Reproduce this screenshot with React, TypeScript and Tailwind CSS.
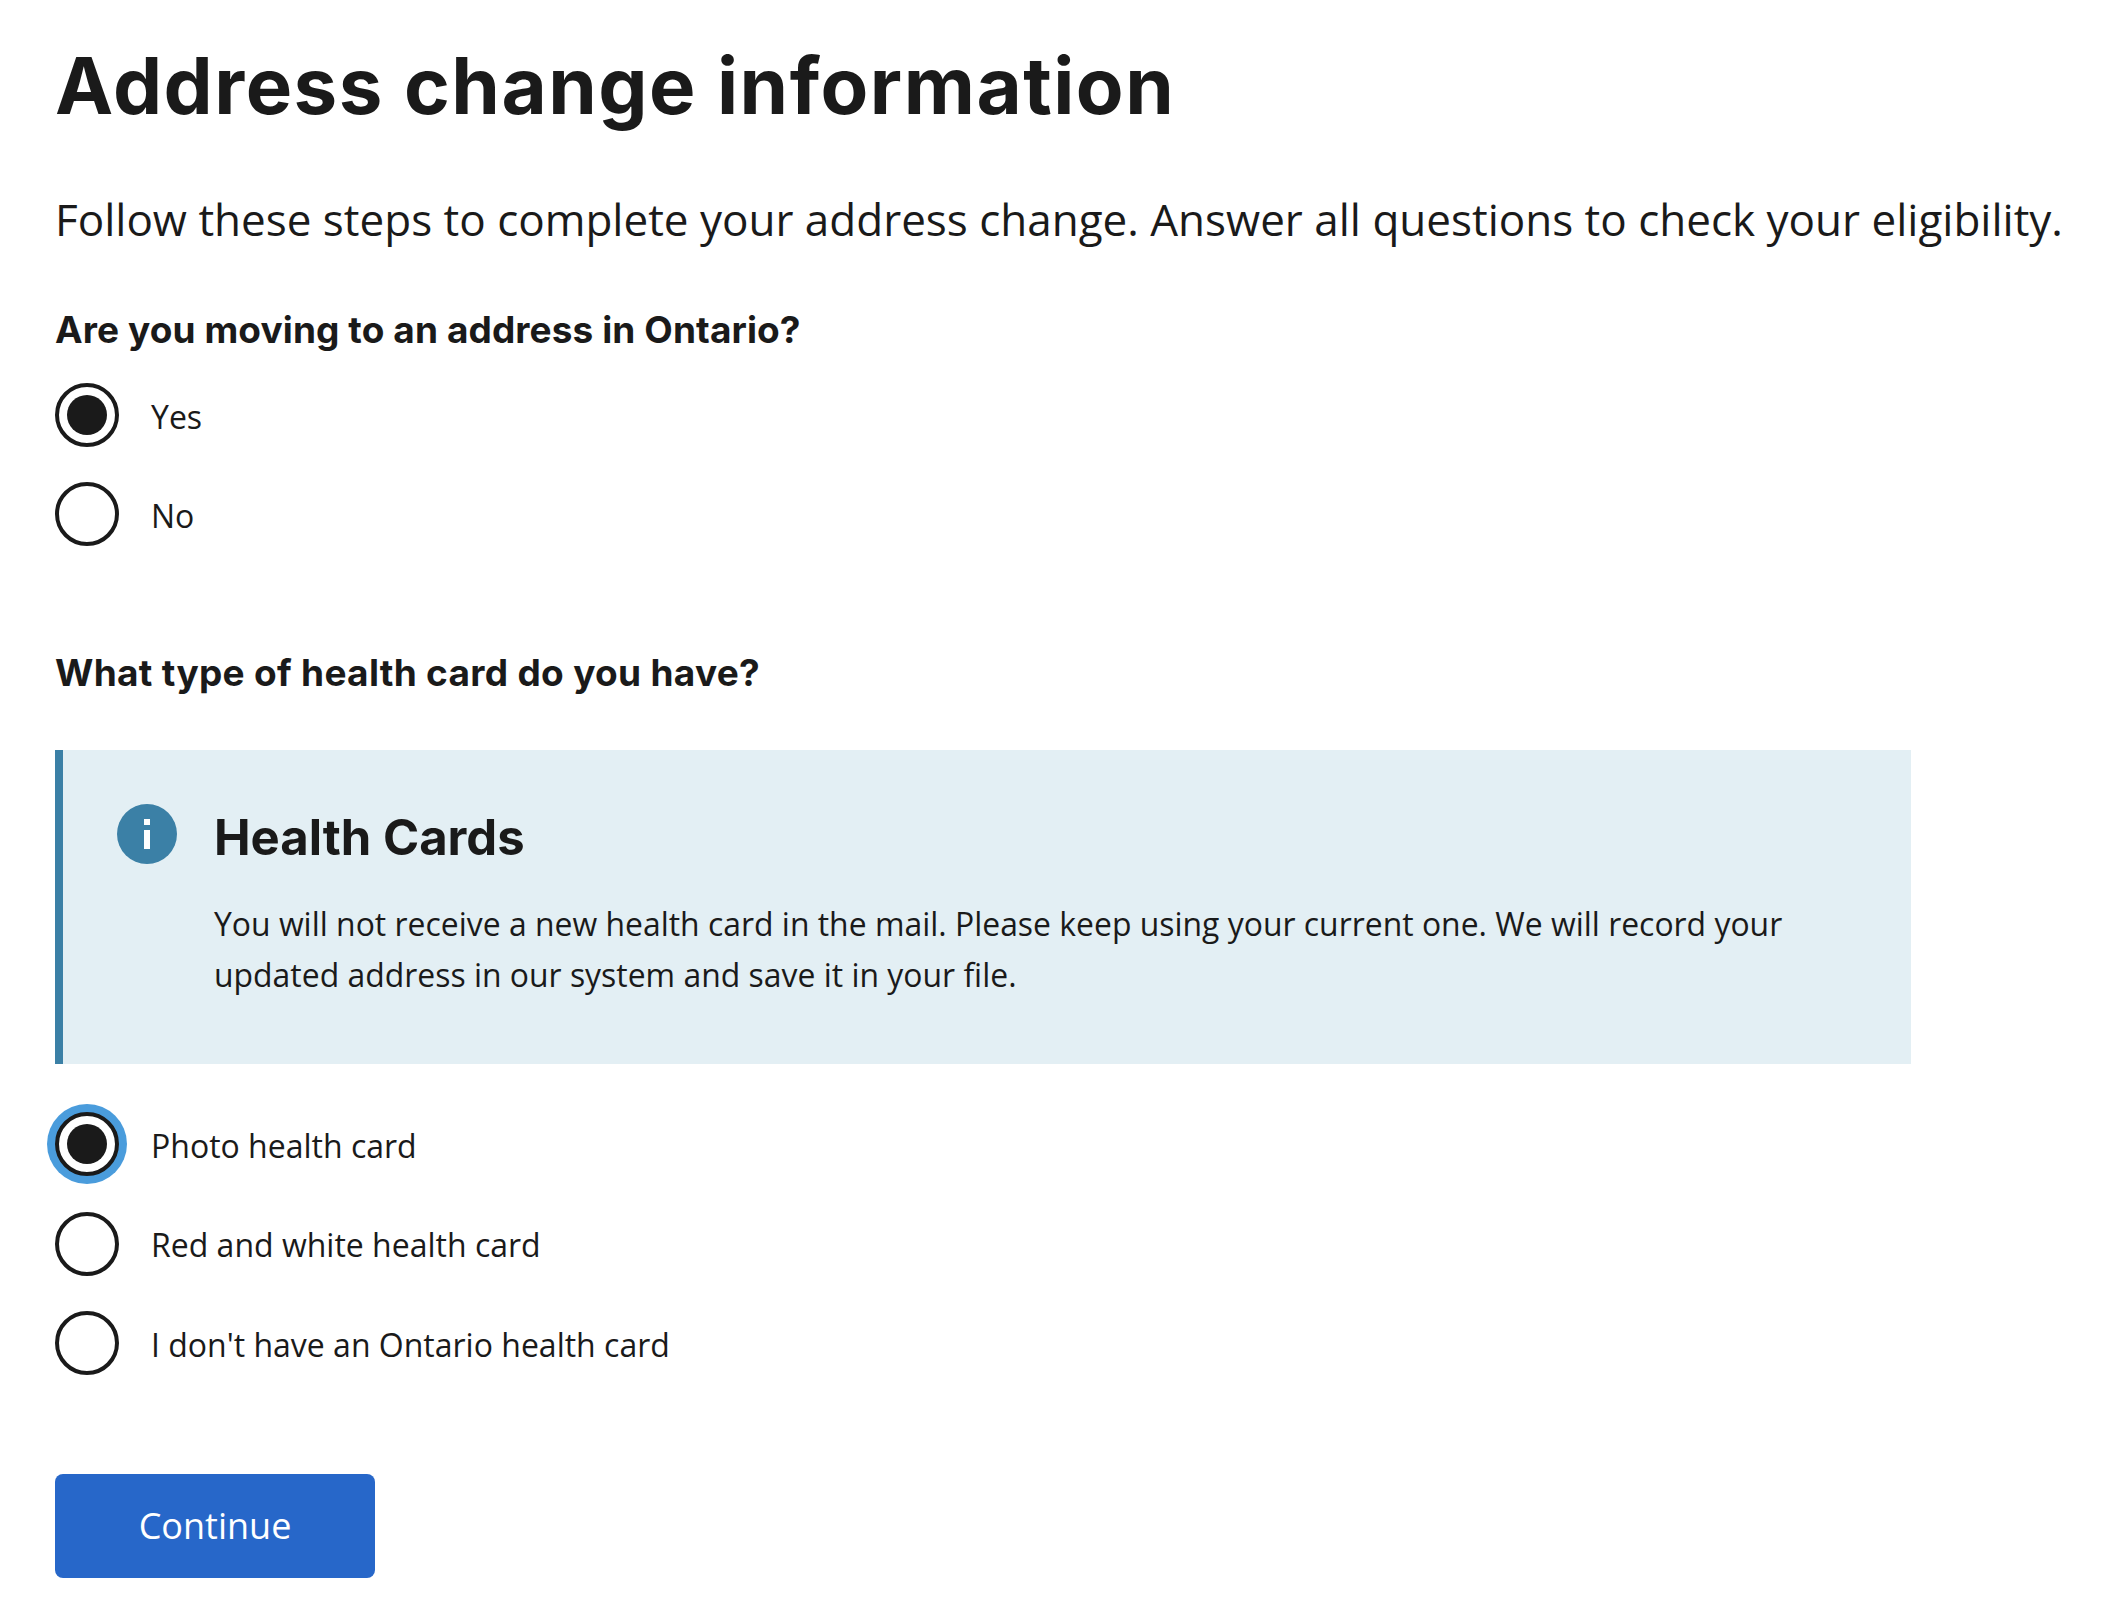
const sans = "font-['Open_Sans',sans-serif]";
const head = "font-['Inter',sans-serif]";

function Radio({ label, checked, focused }: { label: string; checked?: boolean; focused?: boolean }) {
  return (
    <div className="flex items-center h-[64px]">
      <div className={`w-[64px] h-[64px] rounded-full border-4 border-[#1a1a1a] bg-white flex items-center justify-center ${focused ? "shadow-[0_0_0_8px_#4a9cdc]" : ""}`}>
        {checked && <div className="w-[40px] h-[40px] rounded-full bg-[#1a1a1a]" />}
      </div>
      <span className={`ml-[32px] mt-[3px] text-[32px] leading-[48px] text-[#1a1a1a] ${sans}`}>{label}</span>
    </div>
  );
}

export default function App() {
  return (
    <div className="w-[2108px] h-[1608px] bg-white pl-[55px] overflow-hidden">
      <h1 className={`text-[78px] leading-[96px] font-bold tracking-[1.5px] text-[#1a1a1a] pt-[38px] ${head}`}>Address change information</h1>
      <p className={`mt-[53px] text-[44px] leading-[64px] whitespace-nowrap text-[#1a1a1a] ${sans}`}>
        Follow these steps to complete your address change. Answer all questions to check your eligibility.
      </p>
      <h2 className={`mt-[55px] text-[37px] leading-[48px] font-bold tracking-[0.1px] text-[#1a1a1a] ${head}`}>Are you moving to an address in Ontario?</h2>
      <div className="mt-[29px] flex flex-col gap-[35px]">
        <Radio label="Yes" checked />
        <Radio label="No" />
      </div>
      <h2 className={`mt-[103px] text-[37px] leading-[48px] font-bold tracking-[0.3px] text-[#1a1a1a] ${head}`}>What type of health card do you have?</h2>
      <div className="mt-[53px] w-[1856px] h-[314px] bg-[#e3eff4] border-l-8 border-[#3b80a6] pl-[54px] pt-[54px] flex">
        <svg width="60" height="60" viewBox="0 0 60 60" className="shrink-0">
          <circle cx="30" cy="30" r="30" fill="#3b80a6" />
          <rect x="27" y="15" width="6" height="6" fill="#fff" />
          <rect x="27" y="26" width="6" height="19" fill="#fff" />
        </svg>
        <div className="ml-[37px]">
          <h3 className={`text-[49px] leading-[64px] mt-[2px] font-bold text-[#1a1a1a] ${head}`}>Health Cards</h3>
          <p className={`mt-[28px] w-[1600px] text-[31.9px] leading-[51px] tracking-[0.01px] text-[#1a1a1a] ${sans}`}>
            You will not receive a new health card in the mail. Please keep using your current one. We will record your updated address in our system and save it in your file.
          </p>
        </div>
      </div>
      <div className="mt-[48px] flex flex-col gap-[35.5px]">
        <Radio label="Photo health card" checked focused />
        <Radio label="Red and white health card" />
        <Radio label="I don't have an Ontario health card" />
      </div>
      <button className={`mt-[99px] block w-[320px] h-[104px] rounded-[8px] bg-[#2767c9] text-white text-[36px] ${sans}`}>Continue</button>
    </div>
  );
}
